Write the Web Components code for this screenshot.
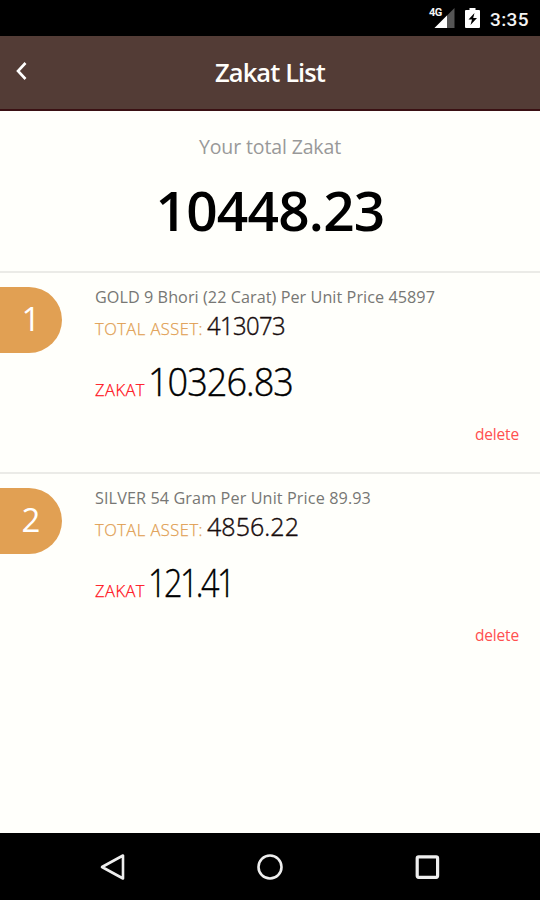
<!DOCTYPE html>
<html lang="en">
<head>
<meta charset="utf-8">
<title>Zakat List</title>
<style>
html,body{margin:0;height:100%}
body{background:#fffffb;font-family:"Open Sans","Noto Sans",sans-serif;overflow:hidden}
</style>
</head>
<body>
<zakat-app></zakat-app>
<script>
function define(name, html, setup) {
  const template = document.createElement('template');
  template.innerHTML = html;
  customElements.define(name, class extends HTMLElement {
    constructor() {
      super();
      this.attachShadow({mode: 'open'}).append(template.content.cloneNode(true));
    }
    connectedCallback() { if (setup) setup.call(this, this.shadowRoot); }
  });
}

// Single line of text that fills the given width, by tracking alone or,
// with the "condense" attribute, by tracking and a horizontal squeeze.
define('fit-text', `
<style>
:host{display:inline-block;white-space:nowrap;flex:none}
span{display:inline-block;transform-origin:0 50%}
</style><span></span>`, function (root) {
  const span = root.querySelector('span');
  const text = this.getAttribute('text');
  span.textContent = text;
  const width = +this.getAttribute('width');
  if (width) {
    const natural = span.getBoundingClientRect().width;
    const squeeze = this.hasAttribute('condense') && natural > width ? Math.sqrt(width / natural) : 1;
    span.style.letterSpacing = (width / squeeze - natural) / text.length + 'px';
    if (squeeze < 1) span.style.transform = `scaleX(${squeeze})`;
  }
});

define('status-bar', `
<style>
:host{display:flex;height:36px;box-sizing:border-box;background:#000;color:#f4f4f4;align-items:center;justify-content:flex-end;padding-right:11px;font:500 19px Roboto,sans-serif}
svg{display:block;margin-right:10px}
fit-text{padding-top:2px}
.net{position:relative;margin-right:10px}
.net svg{margin:0}
.net b{position:absolute;left:0;top:0;font:700 11px/12px Roboto,sans-serif;letter-spacing:-.6px}
</style>
<div class="net"><svg width="26" height="22" viewBox="0 0 26 22"><path d="M25.500 1V21H5.500Z" fill="#555"/><path d="M18 8.500V21H5.500Z" fill="#fff"/><path d="M0 0H14.500V11H0Z" fill="#000"/></svg><b>4G</b></div>
<svg width="15" height="22" viewBox="0 0 15 22"><path d="M4.500 1h6v2H14q1 0 1 1V20q0 1-1 1H1q-1 0-1-1V4q0-1 1-1H4.500Z" fill="#fff"/><path d="M9.500 6 3.500 12.500H7L5.500 18 12 11H8.200Z" fill="#000"/></svg>
<fit-text text="3:35" width="39"></fit-text>`);

define('app-header', `
<style>
:host{display:grid;grid-template-columns:60px 1fr 60px;height:75px;box-sizing:border-box;background:#533c36;border-bottom:2px solid #3a1013;color:#fffefb;align-items:center}
svg{display:block;margin:-4px 0 0 14px}
h1{margin:-2px 0 0;text-align:center;font-size:25.500px;line-height:36px;font-weight:600}
</style>
<svg width="14" height="20" viewBox="0 0 14 20"><path d="M11.500 2 4 10l7.500 8" fill="none" stroke="#fff" stroke-width="2.600"/></svg>
<h1><fit-text text="Zakat List" width="110"></fit-text></h1>`);

define('zakat-total', `
<style>
:host{display:flex;flex-direction:column;align-items:center;height:160px;box-sizing:border-box;padding-top:22px}
.label{color:#999;font-size:19.500px;line-height:28px}
.value{color:#000;font-size:55px;line-height:76px;font-weight:600;margin-top:11px}
</style>
<fit-text class="label" text="Your total Zakat" width="142"></fit-text>
<fit-text class="value" text="10448.23" width="229"></fit-text>`);

define('zakat-item', `
<style>
:host{display:grid;grid-template-columns:62px 1fr;column-gap:33px;height:201px;box-sizing:border-box;border-top:2px solid #ebebe7;padding:14px 21px 0 0}
.badge{height:66px;background:#e1a053;border-radius:0 33px 33px 0;color:#fff;display:flex;align-items:center;justify-content:center;font-size:33px;line-height:66px;padding-bottom:2px;box-sizing:border-box}
.body{display:flex;flex-direction:column}
.desc{color:#777774;font-size:16.200px;line-height:22px;margin-top:-1px}
.row{display:flex;align-items:baseline}
.asset{height:34px;line-height:34px}
.zakat{height:54px;line-height:54px;margin-top:12px}
.label{font-size:16.500px;font-weight:300;-webkit-text-stroke:.25px currentColor}
.asset .label{color:#e1a053;width:112px}
.zakat .label{color:#ff1020;width:53px}
.num{font-weight:300;-webkit-text-stroke:.4px currentColor}
.asset .num{font-size:25px;color:#160b0b}
.zakat .num{font-size:38px;color:#000}
.del{align-self:flex-end;color:#ff5050;font-size:15.500px;line-height:22px;margin-top:15px}
</style>
<div class="badge"><span></span></div>
<div class="body"></div>`, function (root) {
  const get = k => this.getAttribute(k);
  root.querySelector('.badge span').textContent = get('index');
  root.querySelector('.body').innerHTML = `
<fit-text class="desc" text="${get('description')}" width="${get('description-width')}"></fit-text>
<div class="row asset"><fit-text class="label" text="TOTAL ASSET:" width="108"></fit-text><fit-text class="num" condense text="${get('asset')}" width="${get('asset-width')}"></fit-text></div>
<div class="row zakat"><fit-text class="label" text="ZAKAT" width="50"></fit-text><fit-text class="num" condense text="${get('zakat')}" width="${get('zakat-width')}"></fit-text></div>
<fit-text class="del" text="delete" width="44"></fit-text>`;
});

define('nav-bar', `
<style>
:host{display:grid;grid-template-columns:repeat(3,157px);justify-content:center;justify-items:center;align-items:center;height:67px;background:#000}
svg{display:block;fill:none;stroke:#eee;stroke-width:2.600}
</style>
<svg width="30" height="30" viewBox="0 0 30 30"><path d="M25 3.500V26.500L4 15Z" stroke-linejoin="round"/></svg>
<svg width="30" height="30" viewBox="0 0 30 30"><circle cx="15" cy="15" r="11.500"/></svg>
<svg width="30" height="30" viewBox="0 0 30 30"><rect x="5.200" y="4.900" width="20.400" height="20.400" rx="1.500" stroke-width="3.200"/></svg>`);

define('zakat-app', `
<style>
:host{display:flex;flex-direction:column;width:540px;height:900px;background:#fffffb}
main{flex:1}
</style>
<status-bar></status-bar>
<app-header></app-header>
<main>
<zakat-total></zakat-total>
<zakat-item index="1" description="GOLD 9 Bhori (22 Carat) Per Unit Price 45897" description-width="340" asset="413073" asset-width="78" zakat="10326.83" zakat-width="145"></zakat-item>
<zakat-item index="2" description="SILVER 54 Gram Per Unit Price 89.93" description-width="276" asset="4856.22" asset-width="92" zakat="121.41" zakat-width="85"></zakat-item>
</main>
<nav-bar></nav-bar>`);
</script>
</body>
</html>
